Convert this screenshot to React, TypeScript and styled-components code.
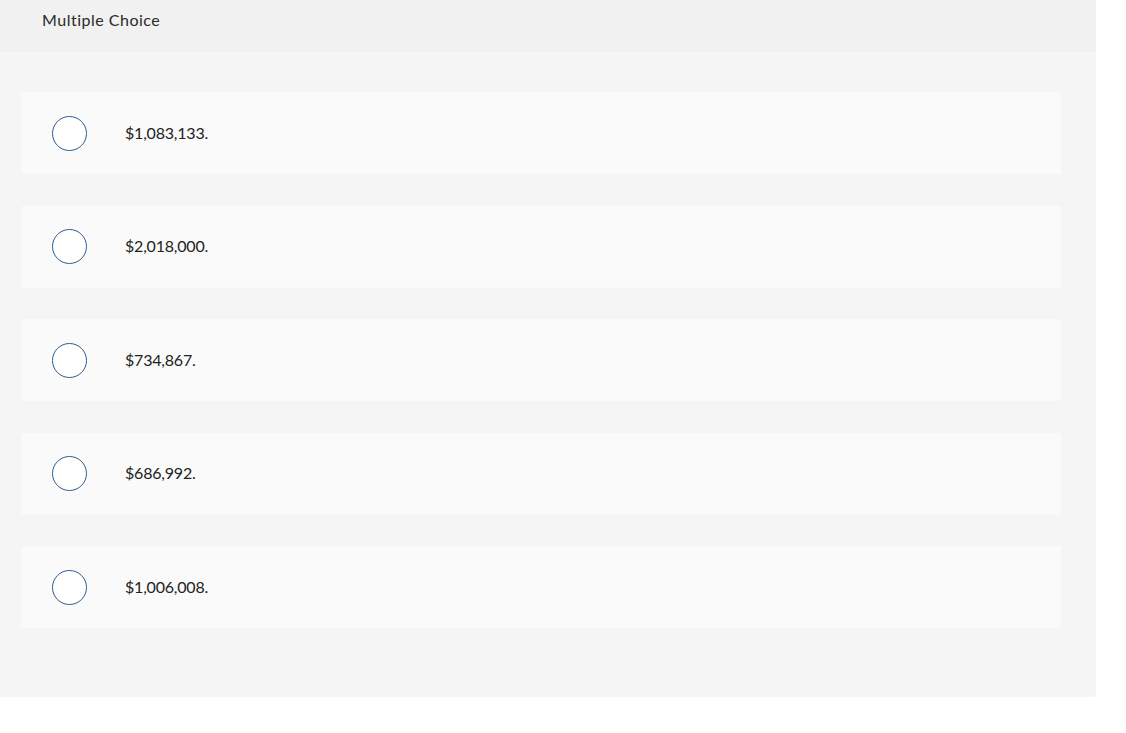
import React from "react";
import styled, { createGlobalStyle } from "styled-components";

const GlobalStyle = createGlobalStyle`
  html, body {
    margin: 0;
    padding: 0;
    background: #ffffff;
    font-family: "Lato", "Open Sans", "Liberation Sans", sans-serif;
    color: #1f1f1f;
  }
`;

const choices = ["$1,083,133.", "$2,018,000.", "$734,867.", "$686,992.", "$1,006,008."];

export default function App() {
  return (
    <>
      <GlobalStyle />
      <Panel>
        <Header>Multiple Choice</Header>
        <List>
          {choices.map((c) => (
            <Choice key={c}>
              <Radio />
              <Label>{c}</Label>
            </Choice>
          ))}
        </List>
      </Panel>
    </>
  );
}

const Panel = styled.div`
  width: 1096px;
  background: #f5f5f5;
  border-bottom-right-radius: 3px;
`;

const Header = styled.div`
  height: 52px;
  background: #f1f1f1;
  padding: 10px 0 0 42px;
  box-sizing: border-box;
  font-size: 16px;
  line-height: 20px;
  letter-spacing: 0.5px;
  color: #2a2a2a;
`;

const List = styled.div`
  display: flex;
  flex-direction: column;
  gap: 31.5px;
  padding: 40px 35px 69px 21px;
`;

const Choice = styled.div`
  height: 82px;
  background: #fafafa;
  border-radius: 3px;
  display: flex;
  align-items: center;
  padding-left: 31px;
  gap: 38px;
`;

const Radio = styled.div`
  width: 35px;
  height: 35px;
  box-sizing: border-box;
  border: 1.5px solid #2f5d8c;
  border-radius: 50%;
  background: #ffffff;
  flex-shrink: 0;
`;

const Label = styled.span`
  font-size: 16px;
  color: #222222;
  letter-spacing: -0.2px;
  margin-top: -2px;
`;
